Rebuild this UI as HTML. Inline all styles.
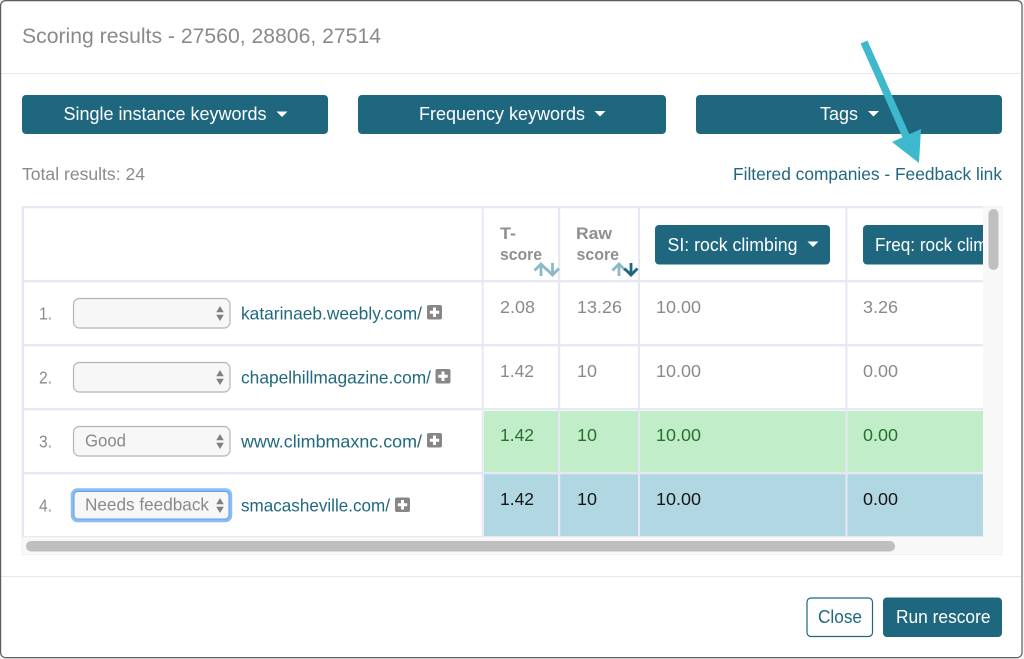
<!DOCTYPE html>
<html lang="en">
<head>
<meta charset="utf-8">
<title>Scoring results</title>
<style>
html,body{margin:0;padding:0;background:#f4f4f4;width:1024px;height:659px;overflow:hidden}
svg{display:block}
text{font-family:"Liberation Sans",sans-serif;font-size:17.5px;fill:#8a8a8a}
.w{fill:#fff;font-size:18.5px}
.l{fill:#20687f}
.g{fill:#2a702c}
.k{fill:#161616}
.h{font-weight:bold;font-size:16.5px;fill:#8f8f8f}
.s{fill:#f7f7f7;stroke:#b4b4b4;stroke-width:1.2}
.b{fill:#1e677f}
.v{fill:#e6e8f4}
.a{fill:#808080}
.p{fill:#878787}
</style>
</head>
<body>
<svg width="1024" height="659" viewBox="0 0 1024 659" xmlns="http://www.w3.org/2000/svg">
<defs><clipPath id="c"><rect x="855" y="210" width="128" height="65"/></clipPath></defs>

<rect x="0.6" y="0.6" width="1021.4" height="657" rx="5" fill="#fff" stroke="#5c5c5c" stroke-width="1.2"/>

<text x="22" y="43" style="font-size:21px" textLength="359" lengthAdjust="spacingAndGlyphs">Scoring results - 27560, 28806, 27514</text>
<rect x="1.5" y="73" width="1020" height="1" class="v"/>

<rect x="22" y="95" width="306" height="39" rx="4" class="b"/>
<text x="63.5" y="120" class="w" textLength="203" lengthAdjust="spacingAndGlyphs">Single instance keywords</text>
<path d="M276.500 111.500h11l-5.500 5.500z" fill="#fff"/>
<rect x="358" y="95" width="308" height="39" rx="4" class="b"/>
<text x="419" y="120" class="w" textLength="166" lengthAdjust="spacingAndGlyphs">Frequency keywords</text>
<path d="M594.500 111h11l-5.500 5.500z" fill="#fff"/>
<rect x="696" y="95" width="306" height="39" rx="4" class="b"/>
<text x="820" y="120" class="w" textLength="38" lengthAdjust="spacingAndGlyphs">Tags</text>
<path d="M868 111h11l-5.500 5.500z" fill="#fff"/>

<text x="22" y="180" textLength="123" lengthAdjust="spacingAndGlyphs">Total results: 24</text>
<text x="733" y="180" class="l" textLength="269" lengthAdjust="spacingAndGlyphs">Filtered companies - Feedback link</text>

<rect x="22" y="207" width="980" height="347.500" fill="#f8f8f8" stroke="#efefef" stroke-width="1"/>
<rect x="23" y="207" width="960" height="329.500" fill="#fff"/>

<rect x="484" y="411" width="74" height="61" fill="#c1edc9"/>
<rect x="560" y="411" width="78" height="61" fill="#c1edc9"/>
<rect x="640" y="411" width="206" height="61" fill="#c1edc9"/>
<rect x="847" y="411" width="136" height="61" fill="#c1edc9"/>
<rect x="484" y="474" width="74" height="62" fill="#b0d7e2"/>
<rect x="560" y="474" width="78" height="62" fill="#b0d7e2"/>
<rect x="640" y="474" width="206" height="62" fill="#b0d7e2"/>
<rect x="847" y="474" width="136" height="62" fill="#b0d7e2"/>

<rect x="22" y="206" width="961" height="2.300" class="v"/>
<rect x="22" y="280" width="961" height="2.300" class="v"/>
<rect x="22" y="344" width="961" height="2.300" class="v"/>
<rect x="22" y="408" width="961" height="2.300" class="v"/>
<rect x="22" y="472" width="961" height="2.300" class="v"/>
<rect x="22" y="536" width="961" height="1" class="v"/>
<rect x="22" y="206" width="2" height="331" class="v"/>
<rect x="481.700" y="206" width="2" height="331" class="v"/>
<rect x="558" y="206" width="2.200" height="331" class="v"/>
<rect x="638" y="206" width="2" height="331" class="v"/>
<rect x="845.500" y="206" width="2" height="331" class="v"/>

<text x="500" y="239" class="h" textLength="16" lengthAdjust="spacingAndGlyphs">T-</text>
<text x="500" y="260" class="h" textLength="42" lengthAdjust="spacingAndGlyphs">score</text>
<text x="576" y="239" class="h" textLength="36" lengthAdjust="spacingAndGlyphs">Raw</text>
<text x="576.500" y="260" class="h" textLength="42.500" lengthAdjust="spacingAndGlyphs">score</text>

<path d="M541 276V264M534.500 270.500l6.500-6.500 6.500 6.500" fill="none" stroke="#8ab9c8" stroke-width="2.800"/>
<path d="M552.500 263v12M546 268.500l6.500 6.500 6.500-6.500" fill="none" stroke="#8ab9c8" stroke-width="2.800"/>
<path d="M619 276V264M612.500 270.500l6.500-6.500 6.500 6.500" fill="none" stroke="#8ab9c8" stroke-width="2.800"/>
<path d="M631 263v12M624.500 268.500l6.500 6.500 6.500-6.500" fill="none" stroke="#1e677f" stroke-width="2.800"/>

<rect x="655" y="225" width="175" height="39.500" rx="4" class="b"/>
<text x="667.500" y="251" class="w" textLength="130" lengthAdjust="spacingAndGlyphs">SI: rock climbing</text>
<path d="M807.500 241.500h11l-5.500 5.500z" fill="#fff"/>
<g clip-path="url(#c)">
<rect x="863" y="225" width="170" height="39.500" rx="4" class="b"/>
<text x="875" y="251" class="w" textLength="145" lengthAdjust="spacingAndGlyphs">Freq: rock climbing</text>
</g>

<text x="39" y="319.500" textLength="13" lengthAdjust="spacingAndGlyphs">1.</text>
<rect x="73.500" y="298.500" width="156.500" height="29.500" rx="6" class="s"/>
<path d="M220 306l3.800 6.200h-7.600z" class="a"/><path d="M220 321l3.800-6.200h-7.600z" class="a"/>
<text x="241" y="319.500" class="l" textLength="181" lengthAdjust="spacingAndGlyphs">katarinaeb.weebly.com/</text>
<rect x="427" y="305" width="15" height="14.500" rx="2" class="p"/>
<path d="M434.500 307.500v9.500M429.800 312.200h9.400" stroke="#fff" stroke-width="3"/>
<text x="500" y="313" textLength="35" lengthAdjust="spacingAndGlyphs">2.08</text>
<text x="577" y="313" textLength="45" lengthAdjust="spacingAndGlyphs">13.26</text>
<text x="656" y="313" textLength="45" lengthAdjust="spacingAndGlyphs">10.00</text>
<text x="863" y="313" textLength="35" lengthAdjust="spacingAndGlyphs">3.26</text>

<text x="39" y="383.500" textLength="13" lengthAdjust="spacingAndGlyphs">2.</text>
<rect x="73.500" y="362.500" width="156.500" height="29.500" rx="6" class="s"/>
<path d="M220 370l3.800 6.200h-7.600z" class="a"/><path d="M220 385l3.800-6.200h-7.600z" class="a"/>
<text x="241" y="383.500" class="l" textLength="190" lengthAdjust="spacingAndGlyphs">chapelhillmagazine.com/</text>
<rect x="435.500" y="369" width="15" height="14.500" rx="2" class="p"/>
<path d="M443 371.500v9.500M438.300 376.200h9.400" stroke="#fff" stroke-width="3"/>
<text x="500" y="377" textLength="34" lengthAdjust="spacingAndGlyphs">1.42</text>
<text x="577" y="377" textLength="20" lengthAdjust="spacingAndGlyphs">10</text>
<text x="656" y="377" textLength="45" lengthAdjust="spacingAndGlyphs">10.00</text>
<text x="863" y="377" textLength="35" lengthAdjust="spacingAndGlyphs">0.00</text>

<text x="39" y="447.500" textLength="13" lengthAdjust="spacingAndGlyphs">3.</text>
<rect x="73.500" y="426.500" width="156.500" height="29.500" rx="6" class="s"/>
<text x="85" y="446.500" textLength="41" lengthAdjust="spacingAndGlyphs">Good</text>
<path d="M220 434l3.800 6.200h-7.600z" class="a"/><path d="M220 449l3.800-6.200h-7.600z" class="a"/>
<text x="241" y="447.500" class="l" textLength="181" lengthAdjust="spacingAndGlyphs">www.climbmaxnc.com/</text>
<rect x="427" y="433" width="15" height="14.500" rx="2" class="p"/>
<path d="M434.500 435.500v9.500M429.800 440.200h9.400" stroke="#fff" stroke-width="3"/>
<text x="500" y="441" class="g" textLength="34" lengthAdjust="spacingAndGlyphs">1.42</text>
<text x="577" y="441" class="g" textLength="20" lengthAdjust="spacingAndGlyphs">10</text>
<text x="656" y="441" class="g" textLength="45" lengthAdjust="spacingAndGlyphs">10.00</text>
<text x="863" y="441" class="g" textLength="35" lengthAdjust="spacingAndGlyphs">0.00</text>

<text x="39" y="511.500" textLength="13" lengthAdjust="spacingAndGlyphs">4.</text>
<rect x="72.500" y="490" width="158" height="30.500" rx="5" fill="none" stroke="#8dbcf5" stroke-width="3.500"/>
<rect x="74" y="491.500" width="155" height="27.500" rx="4" fill="#f7f7f7" stroke="#5d9fe8" stroke-width="1"/>
<text x="85" y="510.500" textLength="124" lengthAdjust="spacingAndGlyphs">Needs feedback</text>
<path d="M220 498l3.800 6.200h-7.600z" class="a"/><path d="M220 513l3.800-6.200h-7.600z" class="a"/>
<text x="241" y="511.500" class="l" textLength="149" lengthAdjust="spacingAndGlyphs">smacasheville.com/</text>
<rect x="395" y="497.500" width="15" height="14.500" rx="2" class="p"/>
<path d="M402.500 500v9.500M397.800 504.700h9.400" stroke="#fff" stroke-width="3"/>
<text x="500" y="505" class="k" textLength="34" lengthAdjust="spacingAndGlyphs">1.42</text>
<text x="577" y="505" class="k" textLength="20" lengthAdjust="spacingAndGlyphs">10</text>
<text x="656" y="505" class="k" textLength="45" lengthAdjust="spacingAndGlyphs">10.00</text>
<text x="863" y="505" class="k" textLength="35" lengthAdjust="spacingAndGlyphs">0.00</text>

<rect x="26" y="541" width="869" height="10.500" rx="5" fill="#bfbfbf"/>
<rect x="988.500" y="209" width="10" height="61" rx="5" fill="#bfbfbf"/>

<rect x="1.500" y="576" width="1020" height="1" class="v"/>
<rect x="807" y="598" width="65.500" height="38.500" rx="4" fill="#fff" stroke="#1e677f" stroke-width="1.200"/>
<text x="818" y="623" class="l" style="font-size:18.5px" textLength="44" lengthAdjust="spacingAndGlyphs">Close</text>
<rect x="883" y="597.500" width="119" height="39.500" rx="4" class="b"/>
<text x="896" y="623" class="w" textLength="94.500" lengthAdjust="spacingAndGlyphs">Run rescore</text>

<path d="M864 42L906 136" stroke="#3db8cc" stroke-width="7.500" fill="none"/>
<path d="M919 163L892 142L921 129z" fill="#3db8cc"/>
</svg>
</body>
</html>
